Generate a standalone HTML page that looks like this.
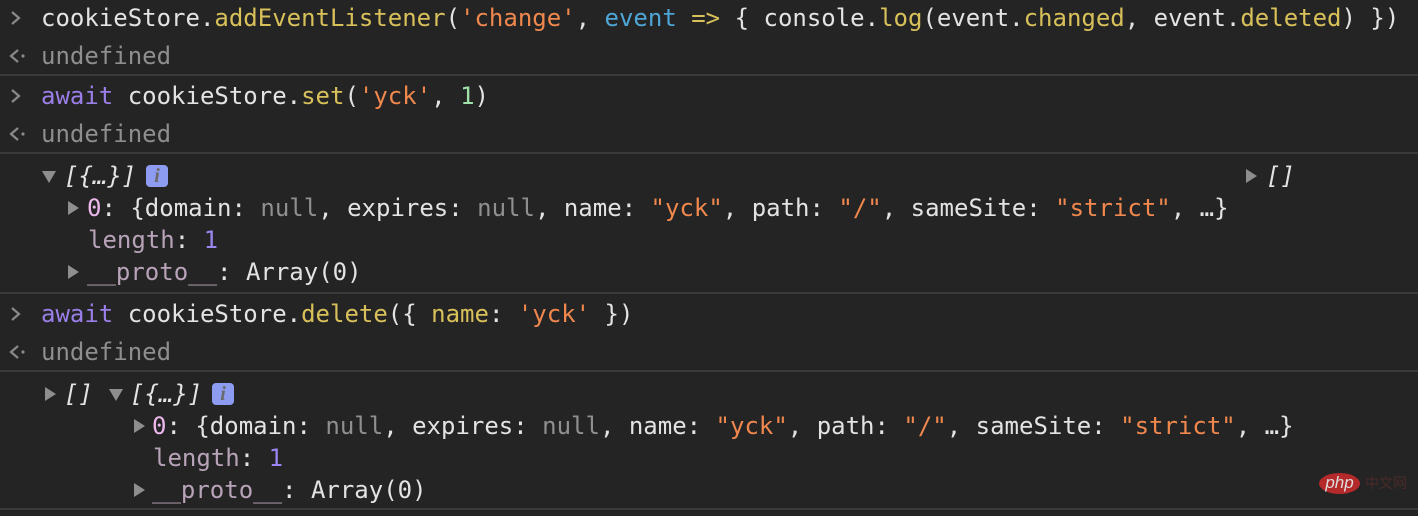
<!DOCTYPE html><html><head><style>
body{margin:0;width:1418px;height:516px;background:#242424;overflow:hidden;font-family:"DejaVu Sans Mono","Liberation Mono",monospace;font-size:24px;color:#e3e3e3;position:relative}
.l{position:absolute;white-space:pre;line-height:30px;height:30px}
.sep{position:absolute;left:0;width:1418px;height:2px;background:#3a3a3a}
.y{color:#d8c05a}.s{color:#f0884e}.b{color:#4ea6d6}.k{color:#9b7fe8}.g{color:#9ee0a8}
.u{color:#8e8e8e}.n{color:#8f8f8f}.p{color:#9b85f0}.m{color:#b8a3b8}.z{color:#ecb8ec}
.i{font-style:italic}
svg.pr{position:absolute;left:8px}
.tri{position:absolute;width:0;height:0}
.dn{border-left:7px solid transparent;border-right:7px solid transparent;border-top:12px solid #8e8e8e}
.rt{border-top:7px solid transparent;border-bottom:7px solid transparent;border-left:11px solid #8e8e8e}
.info{position:absolute;width:22px;height:22px;background:#8d9cf0;border-radius:4px;color:#6a6a6a;font-style:italic;font-size:20px;line-height:22px;text-align:center;font-family:"Liberation Serif",serif;font-weight:bold}
</style></head><body>
<svg class="pr" style="top:10px" width="16" height="16"><path d="M4 2 L11 8 L4 14" fill="none" stroke="#8a8a8a" stroke-width="2.2"/></svg>
<div class="l" style="left:41px;top:3px">cookieStore.<span class="y">addEventListener</span>(<span class="s">'change'</span>, <span class="b">event</span> <span class="y">=&gt;</span> { console.<span class="y">log</span>(event.<span class="y">changed</span>, event.<span class="y">deleted</span>) })</div>
<svg class="pr" style="top:48px" width="20" height="16"><path d="M10 2 L3 8 L10 14" fill="none" stroke="#8a8a8a" stroke-width="2.2"/><circle cx="15" cy="8" r="1.6" fill="#8a8a8a"/></svg>
<div class="l u" style="left:41px;top:41px">undefined</div>
<div class="sep" style="top:74px"></div>
<svg class="pr" style="top:88px" width="16" height="16"><path d="M4 2 L11 8 L4 14" fill="none" stroke="#8a8a8a" stroke-width="2.2"/></svg>
<div class="l" style="left:41px;top:81px"><span class="k">await</span> cookieStore.<span class="y">set</span>(<span class="s">'yck'</span>, <span class="g">1</span>)</div>
<svg class="pr" style="top:126px" width="20" height="16"><path d="M10 2 L3 8 L10 14" fill="none" stroke="#8a8a8a" stroke-width="2.2"/><circle cx="15" cy="8" r="1.6" fill="#8a8a8a"/></svg>
<div class="l u" style="left:41px;top:119px">undefined</div>
<div class="sep" style="top:152px"></div>
<div class="tri dn" style="left:42px;top:171px"></div>
<div class="l i" style="left:64px;top:161px">[{…}]</div>
<div class="info" style="left:146px;top:165px">i</div>
<div class="tri rt" style="left:1246px;top:169px"></div>
<div class="l i" style="left:1266px;top:161px">[]</div>
<div class="tri rt" style="left:68px;top:201px"></div>
<div class="l" style="left:87px;top:193px"><span class="z">0</span>: {domain: <span class="n">null</span>, expires: <span class="n">null</span>, name: <span class="s">"yck"</span>, path: <span class="s">"/"</span>, sameSite: <span class="s">"strict"</span>, …}</div>
<div class="l" style="left:88px;top:225px"><span class="m">length</span>: <span class="p">1</span></div>
<div class="tri rt" style="left:68px;top:265px"></div>
<div class="l" style="left:87px;top:257px"><span class="m">__proto__</span>: Array(0)</div>
<div class="sep" style="top:292px"></div>
<svg class="pr" style="top:306px" width="16" height="16"><path d="M4 2 L11 8 L4 14" fill="none" stroke="#8a8a8a" stroke-width="2.2"/></svg>
<div class="l" style="left:41px;top:299px"><span class="k">await</span> cookieStore.<span class="y">delete</span>({ <span class="y">name</span>: <span class="s">'yck'</span> })</div>
<svg class="pr" style="top:344px" width="20" height="16"><path d="M10 2 L3 8 L10 14" fill="none" stroke="#8a8a8a" stroke-width="2.2"/><circle cx="15" cy="8" r="1.6" fill="#8a8a8a"/></svg>
<div class="l u" style="left:41px;top:337px">undefined</div>
<div class="sep" style="top:370px"></div>
<div class="tri rt" style="left:45px;top:387px"></div>
<div class="l i" style="left:64px;top:379px">[]</div>
<div class="tri dn" style="left:109px;top:389px"></div>
<div class="l i" style="left:130px;top:379px">[{…}]</div>
<div class="info" style="left:212px;top:383px">i</div>
<div class="tri rt" style="left:134px;top:419px"></div>
<div class="l" style="left:152px;top:411px"><span class="z">0</span>: {domain: <span class="n">null</span>, expires: <span class="n">null</span>, name: <span class="s">"yck"</span>, path: <span class="s">"/"</span>, sameSite: <span class="s">"strict"</span>, …}</div>
<div class="l" style="left:153px;top:443px"><span class="m">length</span>: <span class="p">1</span></div>
<div class="tri rt" style="left:134px;top:483px"></div>
<div class="l" style="left:152px;top:475px"><span class="m">__proto__</span>: Array(0)</div>
<div style="position:absolute;left:1319px;top:473px;width:41px;height:21px;border-radius:50%;background:#b42a2a;color:#ddd;font-style:italic;font-family:'Liberation Sans',sans-serif;font-size:17px;line-height:20px;text-align:center">php</div>
<div style="position:absolute;left:1365px;top:473px;color:#4a2a2a;font-family:'Noto Sans CJK SC',sans-serif;font-size:14px;line-height:20px">中文网</div>
<div class="sep" style="top:508px"></div>
</body></html>
